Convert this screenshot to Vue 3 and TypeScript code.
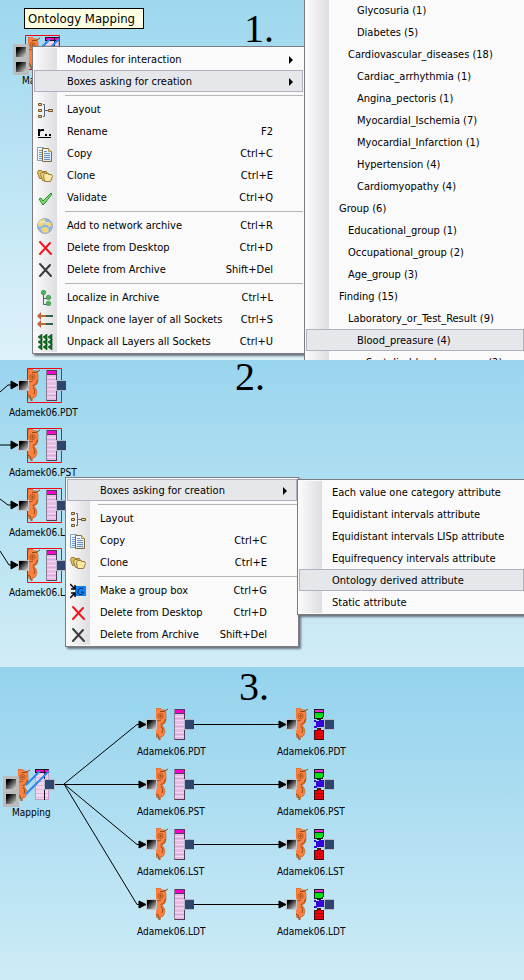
<script setup lang="ts">
interface MenuItem {
  label?: string
  icon?: string
  shortcut?: string
  submenu?: boolean
  active?: boolean
  level?: number
}

interface DiagramNode {
  label: string
  kind: 'column' | 'category'
  x: number
  y: number
}

const mappingMenu: MenuItem[] = [
  { label: 'Modules for interaction', submenu: true },
  { label: 'Boxes asking for creation', submenu: true, active: true },
  {},
  { label: 'Layout', icon: 'layout' },
  { label: 'Rename', icon: 'rename', shortcut: 'F2' },
  { label: 'Copy', icon: 'copy', shortcut: 'Ctrl+C' },
  { label: 'Clone', icon: 'clone', shortcut: 'Ctrl+E' },
  { label: 'Validate', icon: 'validate', shortcut: 'Ctrl+Q' },
  {},
  { label: 'Add to network archive', icon: 'globe', shortcut: 'Ctrl+R' },
  { label: 'Delete from Desktop', icon: 'delete-red', shortcut: 'Ctrl+D' },
  { label: 'Delete from Archive', icon: 'delete-dark', shortcut: 'Shift+Del' },
  {},
  { label: 'Localize in Archive', icon: 'tree', shortcut: 'Ctrl+L' },
  { label: 'Unpack one layer of all Sockets', icon: 'unpack-one', shortcut: 'Ctrl+S' },
  { label: 'Unpack all Layers all Sockets', icon: 'unpack-all', shortcut: 'Ctrl+U' },
]

const ontologyMenu: MenuItem[] = [
  { label: 'Glycosuria (1)', level: 2 },
  { label: 'Diabetes (5)', level: 2 },
  { label: 'Cardiovascular_diseases (18)', level: 1 },
  { label: 'Cardiac_arrhythmia (1)', level: 2 },
  { label: 'Angina_pectoris (1)', level: 2 },
  { label: 'Myocardial_Ischemia (7)', level: 2 },
  { label: 'Myocardial_Infarction (1)', level: 2 },
  { label: 'Hypertension (4)', level: 2 },
  { label: 'Cardiomyopathy (4)', level: 2 },
  { label: 'Group (6)', level: 0 },
  { label: 'Educational_group (1)', level: 1 },
  { label: 'Occupational_group (2)', level: 1 },
  { label: 'Age_group (3)', level: 1 },
  { label: 'Finding (15)', level: 0 },
  { label: 'Laboratory_or_Test_Result (9)', level: 1 },
  { label: 'Blood_preasure (4)', level: 2, active: true },
  { label: 'Systolic_blood_preasure (2)', level: 3 },
]

const groupMenu: MenuItem[] = [
  { label: 'Boxes asking for creation', submenu: true, active: true },
  {},
  { label: 'Layout', icon: 'layout' },
  { label: 'Copy', icon: 'copy', shortcut: 'Ctrl+C' },
  { label: 'Clone', icon: 'clone', shortcut: 'Ctrl+E' },
  {},
  { label: 'Make a group box', icon: 'group', shortcut: 'Ctrl+G' },
  { label: 'Delete from Desktop', icon: 'delete-red', shortcut: 'Ctrl+D' },
  { label: 'Delete from Archive', icon: 'delete-dark', shortcut: 'Shift+Del' },
]

const attributeMenu: MenuItem[] = [
  { label: 'Each value one category attribute' },
  { label: 'Equidistant intervals attribute' },
  { label: 'Equidistant intervals LISp attribute' },
  { label: 'Equifrequency intervals attribute' },
  { label: 'Ontology derived attribute', active: true },
  { label: 'Static attribute' },
]

const names = ['Adamek06.PDT', 'Adamek06.PST', 'Adamek06.LST', 'Adamek06.LDT']

const row = (kind: DiagramNode['kind'], x: number, y: number): DiagramNode[] =>
  names.map((label, i) => ({ label, kind, x, y: y + i * 60 }))

const selectedNodes = row('column', 18, 7)
const resultNodes = [...row('column', 146, 39), ...row('category', 286, 39)]

const place = (n: DiagramNode) => ({ left: `${n.x}px`, top: `${n.y}px` })
</script>

<template>
  <svg class="defs" aria-hidden="true">
    <defs>
      <linearGradient id="socket-fill" x1="0" y1="0" x2="1" y2="1">
        <stop offset="0.2" stop-color="#000" />
        <stop offset="1" stop-color="#d8d8d8" />
      </linearGradient>
      <linearGradient id="page-fill" x1="0" y1="0" x2="1" y2="1">
        <stop offset="0" stop-color="#fff" />
        <stop offset="1" stop-color="#cfe2f4" />
      </linearGradient>
    </defs>

    <symbol id="owl" viewBox="0 0 12 32">
      <path d="M0 0h4l2 2h3l1 4v5l-1 4-3 2 2 3 1 3-1 4-2 2-1-1-1 4-1-3-2 1-1-3-1-1z" fill="#ff8040" stroke="#b45a20" stroke-width=".6" />
      <path d="M4 3.500h4l4-2.500M9.500 11q-1 5-5 5.500M0 26l2 1 1 3v2M5 18q3 3 1 7" fill="none" stroke="#8c4a14" />
      <circle cx="4.500" cy="8" r="2.600" fill="#ff8040" stroke="#a04c10" stroke-width=".8" />
      <path d="M4 7h1v2h-1zM0 12l2 1 3-1" fill="none" stroke="#8c4a14" stroke-width=".8" />
    </symbol>

    <symbol id="socket" viewBox="0 0 11 11">
      <path d="M0 0h11v11H0z" fill="#c4c4c8" />
      <path d="M1 1h9v9H1z" fill="url(#socket-fill)" />
    </symbol>

    <symbol id="outlet" viewBox="0 0 11 11">
      <path d="M0 0h11v11H0z" fill="#b4b8c4" />
      <path d="M1 1h9v9H1z" fill="#30456d" />
    </symbol>

    <symbol id="column" viewBox="0 0 48 38">
      <use href="#owl" x="10" y="2" width="12" height="32" />
      <g shape-rendering="crispEdges">
        <path d="M28 3h11v31H28z" fill="#4e3c56" />
        <path d="M28 3h1v31h-1z" fill="#8a7a90" />
        <path d="M29 4h9v3h-9z" fill="#ff00d0" />
        <path d="M29 8h9v25h-9z" fill="#e4bce4" />
        <path d="M29 10h9v1h-9zM29 14h9v1h-9zM29 18h9v1h-9zM29 22h9v1h-9zM29 26h9v1h-9zM29 30h9v1h-9z" fill="#f2d8f2" />
        <path d="M29 12h9v1h-9zM29 20h9v1h-9zM29 28h9v1h-9z" fill="#d8acda" />
      </g>
      <use href="#socket" x="0" y="13" width="11" height="11" />
      <use href="#outlet" x="38" y="13" width="11" height="11" />
    </symbol>

    <symbol id="category" viewBox="0 0 48 38">
      <use href="#owl" x="10" y="2" width="12" height="32" />
      <g shape-rendering="crispEdges">
        <path d="M28 3h10v8h-1v2h-2v1h-4v-1h-3z" fill="#182018" />
        <path d="M29 4h8v2h-8z" fill="#ff20e0" />
        <path d="M29 7h8v4h-1v1h-7z" fill="#00e018" />
        <path d="M28 14h2v1h3v-1h5v7h-7v1h-3v-2h2v-4h-2z" fill="#3404d8" />
        <path d="M28 24h3v-2h4v2h3v10H28z" fill="#401014" />
        <path d="M29 25h3v-1h3v1h2v8h-8z" fill="#ee0008" />
        <path d="M29 27h8v1h-8zM29 30h8v1h-8z" fill="#c00008" />
      </g>
      <use href="#socket" x="0" y="13" width="11" height="11" />
      <use href="#outlet" x="38" y="13" width="11" height="11" />
    </symbol>

    <symbol id="mapping" viewBox="0 0 52 40">
      <use href="#owl" x="15" y="2" width="12" height="32" />
      <g shape-rendering="crispEdges">
        <path d="M32 2h14v31H32z" fill="#c89ac8" />
        <path d="M33 6h12v26H33z" fill="#f2d4ee" />
        <path d="M33 10h12v1H33zM33 14h12v1H33zM33 18h12v1H33zM33 22h12v1H33zM33 26h12v1H33zM33 30h12v1H33z" fill="#deb8de" />
        <path d="M32 2h14v4H32z" fill="#201020" />
        <path d="M33 3h8v2h-8zM42 3h4v2h-4z" fill="#ff00c8" />
        <path d="M41 2h1v31h-1z" fill="#201020" />
      </g>
      <path d="M23 18L37 4M23 27L46 4" stroke="#2c86f4" stroke-width="2" />
      <path d="M0 9h16v31H0z" fill="#bcbcbc" />
      <path d="M3 12h10v10H3z" fill="url(#socket-fill)" />
      <path d="M3 27h10v10H3z" fill="url(#socket-fill)" />
      <use href="#outlet" x="41" y="12" width="11" height="11" />
    </symbol>

    <symbol id="icon-layout" viewBox="0 0 16 16">
      <path d="M6 2.500h1.500v12H6M8 8.500h3" fill="none" stroke="#52667c" />
      <path d="M1.500 1.500h3v2h-3zM1.500 7.500h3v2h-3zM1.500 13.500h3v2h-3zM11.500 7.500h4v2h-4z" fill="#f2d68a" stroke="#705428" />
    </symbol>
    <symbol id="icon-rename" viewBox="0 0 16 16">
      <path d="M1 5h2v1l1-1h3v2H4l-1 1v4H1zM8 10h2v2H8zM12 10h2v2h-2z" fill="#000" />
      <path d="M1 13.500h13" stroke="#000" />
    </symbol>
    <symbol id="icon-copy" viewBox="0 0 16 16">
      <path d="M.5 1.500h6l2 2v11h-8z" fill="url(#page-fill)" stroke="#7ca0c8" />
      <path d="M2 4.500h3M2 6.500h3M2 8.500h3M2 10.500h3M2 12.500h3" stroke="#7898c0" />
      <path d="M5.500 2.500h6l3 3v10h-9z" fill="url(#page-fill)" stroke="#806c38" />
      <path d="M11.500 2.500v3h3" fill="#f4e4b0" stroke="#b09850" />
      <path d="M7 5.500h3M7 7.500h6M7 9.500h6M7 11.500h6M7 13.500h6" stroke="#668cc0" />
    </symbol>
    <symbol id="icon-clone" viewBox="0 0 16 16">
      <path d="M.5 4.500l1-2h3l1 1h4l1 2-1 5h-7z" fill="#e0c060" stroke="#9a7c34" />
      <path d="M3.500 6.500l1-2h3l1 1h3l1 2-1 5h-6z" fill="#ecd480" stroke="#9a7c34" />
      <path d="M6.500 7.500l1-2h3l1 1h3l1 2-2 5h-6z" fill="#f8e8a4" stroke="#9a7c34" />
    </symbol>
    <symbol id="icon-validate" viewBox="0 0 16 16">
      <path d="M2 9l2-1 2 3 8-8 1 1-7 9-2 2z" fill="#7cdc68" stroke="#2c8c34" />
    </symbol>
    <symbol id="icon-globe" viewBox="0 0 16 16">
      <circle cx="8" cy="8" r="7.500" fill="#80b8ec" stroke="#a8a8b8" />
      <path d="M3 2l5-1 1 2-2 1 1 2-3 2-3 1-1-3zM9 4l4 0 2 4-3 1-2-2-2 0zM4 10l5-1 3 2-1 3-4 1-2-2z" fill="#f6d474" />
      <path d="M2 5q4-3 8 0" fill="none" stroke="#e6f4ff" />
    </symbol>
    <symbol id="icon-delete-red" viewBox="0 0 16 16">
      <path d="M3 2l11 12M13 3L3 14" stroke="#f01820" stroke-width="2" stroke-linecap="round" />
    </symbol>
    <symbol id="icon-delete-dark" viewBox="0 0 16 16">
      <path d="M3 2l11 12M13 3L3 14" stroke="#3c3c40" stroke-width="2" stroke-linecap="round" />
    </symbol>
    <symbol id="icon-tree" viewBox="0 0 16 16">
      <path d="M6.500 4v10.500H11M6.500 8.500H11" fill="none" stroke="#50607c" />
      <circle cx="6.500" cy="2.500" r="2.300" fill="#4cb45c" stroke="#328848" stroke-width=".6" />
      <circle cx="11.500" cy="7.500" r="2.300" fill="#4cb45c" stroke="#328848" stroke-width=".6" />
      <circle cx="11.500" cy="13.500" r="2.300" fill="#4cb45c" stroke="#328848" stroke-width=".6" />
    </symbol>
    <symbol id="icon-unpack-one" viewBox="0 0 16 16">
      <path d="M8 4h8M8 12h8" stroke="#2c6848" stroke-width="2" />
      <path d="M3 4h6M3 12h6" stroke="#c46438" stroke-width="2" />
      <path d="M0 4l4-4v8zM0 12l4-4v8z" fill="#c46438" />
    </symbol>
    <symbol id="icon-unpack-all" viewBox="0 0 16 16">
      <path d="M1 3l4-3v6zM6 3l4-3v6zM11 3l4-3v6zM1 8l4-3v6zM6 8l4-3v6zM11 8l4-3v6zM1 13l4-3v6zM6 13l4-3v6zM11 13l4-3v6z" fill="#08761a" stroke="#063c10" stroke-width=".6" />
    </symbol>
    <symbol id="icon-group" viewBox="0 0 16 16">
      <path d="M5 3h11v10H5z" fill="#0c84f4" />
      <path d="M13 5.500q-4-1.500-5 2.500t4 3.500l1-1V9h-2" fill="none" stroke="#06204c" />
      <path d="M0 1l5 5M1 6h4V2M0 15l5-5M1 10h4v4" fill="none" stroke="#000" stroke-width="1.500" />
    </symbol>
  </svg>

  <main class="board">
    <section class="step first">
      <h2 class="number">1.</h2>
      <p class="tooltip">Ontology Mapping</p>
      <figure class="node mapping in-first">
        <svg class="glyph" viewBox="0 0 52 40">
          <path class="frame" d="M12.500.500h34v34h-34z" />
          <use href="#mapping" width="52" height="40" />
        </svg>
        <figcaption>Mapping</figcaption>
      </figure>

      <menu class="menu mapping-menu">
        <template v-for="(item, i) in mappingMenu" :key="i">
          <li v-if="item.label">
            <button type="button" class="item" :class="{ active: item.active }">
              <svg class="icon" viewBox="0 0 16 16" aria-hidden="true">
                <use v-if="item.icon" :href="`#icon-${item.icon}`" width="16" height="16" />
              </svg>
              <span class="label">{{ item.label }}</span>
              <kbd v-if="item.shortcut">{{ item.shortcut }}</kbd>
              <span v-if="item.submenu" class="arrow"></span>
            </button>
          </li>
          <li v-else class="separator" role="separator"></li>
        </template>
      </menu>

      <menu class="menu ontology-menu">
        <li v-for="item in ontologyMenu" :key="item.label">
          <button type="button" class="item" :class="[`level-${item.level}`, { active: item.active }]">
            <span class="icon"></span>
            <span class="label">{{ item.label }}</span>
          </button>
        </li>
      </menu>
    </section>

    <section class="step second">
      <h2 class="number">2.</h2>
      <svg class="wires" aria-hidden="true">
        <path d="M0 32L8 25h4M0 85h12M0 139l8 6h4M0 191l9 14h3" />
        <path v-for="n in selectedNodes" :key="n.label" class="head" :d="`M11 ${n.y + 14}v8l7-4z`" />
      </svg>
      <figure v-for="n in selectedNodes" :key="n.label" class="node" :style="place(n)">
        <svg class="glyph" viewBox="0 0 48 38">
          <path class="frame" d="M9.500 1.500h34v34h-34z" />
          <use :href="`#${n.kind}`" width="48" height="38" />
        </svg>
        <figcaption>{{ n.label }}</figcaption>
      </figure>

      <menu class="menu group-menu">
        <template v-for="(item, i) in groupMenu" :key="i">
          <li v-if="item.label">
            <button type="button" class="item" :class="{ active: item.active }">
              <svg class="icon" viewBox="0 0 16 16" aria-hidden="true">
                <use v-if="item.icon" :href="`#icon-${item.icon}`" width="16" height="16" />
              </svg>
              <span class="label">{{ item.label }}</span>
              <kbd v-if="item.shortcut">{{ item.shortcut }}</kbd>
              <span v-if="item.submenu" class="arrow"></span>
            </button>
          </li>
          <li v-else class="separator" role="separator"></li>
        </template>
      </menu>

      <menu class="menu attribute-menu">
        <li v-for="item in attributeMenu" :key="item.label">
          <button type="button" class="item" :class="{ active: item.active }">
            <span class="icon"></span>
            <span class="label">{{ item.label }}</span>
          </button>
        </li>
      </menu>
    </section>

    <section class="step third">
      <h2 class="number">3.</h2>
      <svg class="wires" aria-hidden="true">
        <path d="M54 117.500h10M64 117L137 57.500h3M64 117.500h76M64 117l73 60.500h3M64 117l73 120.500h3" />
        <path v-for="i in 4" :key="i" :d="`M194 ${i * 60 - 3}.5h88`" />
        <path v-for="n in resultNodes" :key="n.label + n.kind" class="head" :d="`M${n.x - 7} ${n.y + 15}v7l7-3.500z`" />
      </svg>
      <figure class="node mapping in-third">
        <svg class="glyph" viewBox="0 0 52 40">
          <use href="#mapping" width="52" height="40" />
        </svg>
        <figcaption>Mapping</figcaption>
      </figure>
      <figure v-for="n in resultNodes" :key="n.label + n.kind" class="node" :style="place(n)">
        <svg class="glyph" viewBox="0 0 48 38">
          <use :href="`#${n.kind}`" width="48" height="38" />
        </svg>
        <figcaption>{{ n.label }}</figcaption>
      </figure>
    </section>
  </main>
</template>

<style>
body {
  margin: 0;
}
</style>

<style scoped>
.defs {
  position: absolute;
  width: 0;
  height: 0;
}

.board {
  display: grid;
  grid-template-rows: 360fr 307fr 313fr;
  min-height: 100vh;
  color: #000;
  font-family: "DejaVu Sans Condensed", "DejaVu Sans", sans-serif;
  font-size: 11px;
}

.step {
  position: relative;
  overflow: hidden;
}

.first {
  background: linear-gradient(#9dd7ee, #def2fa);
}

.second {
  background: linear-gradient(#99d5ee, #d1edf6);
}

.third {
  background: linear-gradient(#94d3ed, #cdebf6);
}

.number {
  position: absolute;
  margin: 0;
  font: 400 40px/32px "Liberation Serif", serif;
}

.first .number {
  left: 244px;
  top: 13px;
}

.second .number {
  left: 235px;
  top: 1px;
}

.third .number {
  left: 239px;
  top: 4px;
}

.tooltip {
  position: absolute;
  left: 24px;
  top: 8px;
  margin: 0;
  padding: 0 8px 0 3px;
  border: 1px solid #000;
  background: #ffffe4;
  font-size: 13px;
  line-height: 19px;
  white-space: nowrap;
}

.node {
  position: absolute;
  margin: 0;
  font-size: 10px;
  line-height: 16px;
  white-space: nowrap;
}

.glyph {
  display: block;
  width: 48px;
  height: 38px;
  overflow: visible;
}

.node figcaption {
  margin-left: -9px;
}

.mapping .glyph {
  width: 52px;
  height: 40px;
  margin-bottom: -2px;
}

.mapping figcaption {
  margin-left: 9px;
}

.in-first {
  left: 13px;
  top: 35px;
}

.in-third {
  left: 3px;
  top: 100px;
}

.frame {
  fill: none;
  stroke: #f00810;
}

.wires {
  position: absolute;
  inset: 0;
  width: 100%;
  height: 100%;
  fill: none;
  stroke: #000;
}

.wires .head {
  fill: #000;
}

.menu {
  position: absolute;
  box-sizing: border-box;
  margin: 0;
  padding: 1px;
  border: 1px solid #7c7c84;
  background: linear-gradient(90deg, #fafafa, #dedee2) 1px 1px / 23px calc(100% - 2px) no-repeat #fafafa;
  box-shadow: 2px 2px 2px #68747c;
  list-style: none;
}

.mapping-menu {
  left: 32px;
  top: 46px;
  width: 273px;
}

.ontology-menu {
  left: 304px;
  right: -2px;
  top: -3px;
}

.group-menu {
  left: 65px;
  top: 117px;
  width: 234px;
}

.attribute-menu {
  left: 297px;
  right: -2px;
  top: 119px;
}

.item {
  display: flex;
  align-items: center;
  box-sizing: border-box;
  width: 100%;
  height: 22px;
  margin: 0;
  padding: 1px 29px 0 2px;
  border: 1px solid transparent;
  background: none;
  color: inherit;
  font: inherit;
  line-height: 20px;
  text-align: left;
  white-space: nowrap;
}

.item.active {
  border-color: #b0b0c0;
  background: #e6e7eb;
}

.icon {
  flex: none;
  width: 16px;
  height: 16px;
  margin-right: 14px;
}

.label {
  flex: 1;
}

.level-1 .label {
  padding-left: 9px;
}

.level-2 .label {
  padding-left: 18px;
}

.level-3 .label {
  padding-left: 27px;
}

kbd {
  font: inherit;
}

.arrow {
  width: 0;
  margin-right: -20px;
  border: 4px solid transparent;
  border-left-color: #000;
  border-right-width: 0;
}

.separator {
  height: 6px;
  margin-left: 31px;
  background: linear-gradient(#b4b4b8, #b4b4b8) 0 3px / 100% 1px no-repeat;
}
</style>
